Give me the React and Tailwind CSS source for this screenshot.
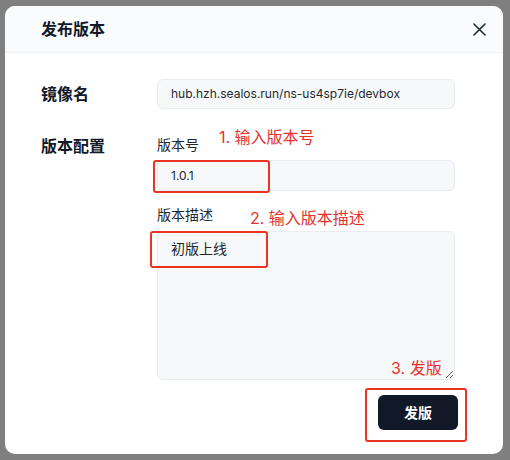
const font = { fontFamily: '"Inter", "Noto Sans CJK SC", sans-serif' };

const Note = ({ className, children }) => (
  <span className={"absolute whitespace-nowrap text-[16px] leading-5 text-[#e5322d] " + className}>
    {children}
  </span>
);

const Mark = ({ className }) => (
  <div className={"absolute rounded-[3px] border-2 border-[#ea3323] pointer-events-none " + className} />
);

export default function App() {
  return (
    <div className="w-[510px] h-[460px] bg-[#7f7f7f] overflow-hidden pt-[6px] pl-[5px]" style={font}>
      <div className="w-[498px] h-[448px] bg-white rounded-[10px] overflow-hidden flex flex-col">
        {/* header */}
        <div className="h-[47px] shrink-0 bg-[#fafbfc] border-b border-[#eef0f3] flex items-center justify-between pl-[36px] pr-[16px]">
          <h1 className="text-[16px] font-semibold text-[#111827]">发布版本</h1>
          <button className="w-4 h-4 flex items-center justify-center text-[#1f2937]">
            <svg width="13" height="13" viewBox="0 0 13 13" fill="none" stroke="currentColor" strokeWidth="1.6" strokeLinecap="round">
              <path d="M1 1L12 12M12 1L1 12" />
            </svg>
          </button>
        </div>

        {/* body */}
        <div className="flex-1 pl-[36px] pr-[48px] pt-[26px]">
          <div className="flex items-center">
            <div className="w-[116px] text-[16px] font-semibold text-[#111827]">镜像名</div>
            <div className="flex-1 h-[30px] rounded-[6px] bg-[#f7f8fa] border border-[#e8ebf0] flex items-center pl-[13px] text-[12px] text-[#24282c]">
              hub.hzh.sealos.run/ns-us4sp7ie/devbox
            </div>
          </div>

          <div className="flex mt-[26px]">
            <div className="w-[116px] text-[16px] font-semibold text-[#111827] leading-5 pt-[1px]">版本配置</div>
            <div className="flex-1 flex flex-col">
              <div className="relative text-[14px] leading-5 text-[#24282c]">
                版本号
                <Note className="left-[62px] -top-[8px]">1. 输入版本号</Note>
              </div>
              <div className="relative mt-[5px] h-[31px] rounded-[6px] bg-[#f7f8fa] border border-[#e8ebf0] flex items-center pl-[13px] text-[12px] text-[#24282c]">
                1.0.1
                <Mark className="-left-[5px] -top-[1px] w-[117px] h-[33px]" />
              </div>

              <div className="relative mt-[14px] text-[14px] leading-5 text-[#24282c]">
                版本描述
                <Note className="left-[93px] top-[3px]">2. 输入版本描述</Note>
              </div>
              <div className="relative mt-[6px] h-[149px]">
                <textarea
                  readOnly
                  defaultValue="初版上线"
                  className="w-full h-full rounded-[6px] bg-[#f7f8fa] border border-[#e8ebf0] pl-[13px] pt-[7px] text-[14px] leading-5 text-[#24282c] outline-none"
                />
                <Mark className="-left-[7px] top-0 w-[118px] h-[37px]" />
                <Note className="left-[234px] top-[127px]">3. 发版</Note>
              </div>

              <div className="relative flex justify-end mt-[15px] -mr-[3px]">
                <button className="w-[80px] h-[35px] rounded-[6px] bg-[#111827] text-white text-[14px] font-bold">
                  发版
                </button>
                <Mark className="-right-[9px] -top-[7px] w-[102px] h-[54px]" />
              </div>
            </div>
          </div>
        </div>
      </div>
    </div>
  );
}
